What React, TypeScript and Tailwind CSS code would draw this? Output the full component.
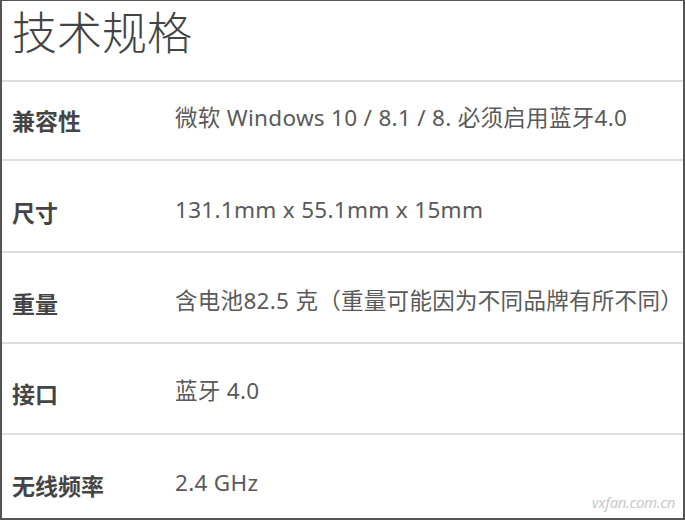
const specs = [
  { label: "兼容性", value: "微软 Windows 10 / 8.1 / 8. 必须启用蓝牙4.0", h: "h-[79px]", pt: "pt-[24px]" },
  { label: "尺寸", value: "131.1mm x 55.1mm x 15mm", h: "h-[92px]", pt: "pt-[37px]" },
  { label: "重量", value: "含电池82.5 克（重量可能因为不同品牌有所不同）", h: "h-[91px]", pt: "pt-[36px]" },
  { label: "接口", value: "蓝牙 4.0", h: "h-[91px]", pt: "pt-[35px]" },
  { label: "无线频率", value: "2.4 GHz", h: "h-[86px]", pt: "pt-[36px]" },
];

export default function App() {
  return (
    <div
      className="w-[685px] h-[520px] bg-white border-t border-l-2 border-r-2 border-b-2 border-[#555] overflow-hidden flex flex-col"
      style={{ fontFamily: '"Noto Sans", "Noto Sans CJK SC", sans-serif' }}
    >
      <div className="h-[79px] shrink-0 flex items-start pl-[10px] pt-[2px]">
        <h1 className="text-[45px] leading-[60px] font-light text-[#444]">技术规格</h1>
      </div>
      {specs.map((s, i) => (
        <div
          key={i}
          className={`relative shrink-0 flex items-start border-t-2 border-[#dedede] ${s.h} ${s.pt}`}
        >
          <div className="w-[173px] shrink-0 pl-[10px] text-[23px] leading-[30px] font-bold text-[#454545]">
            {s.label}
          </div>
          <div className="-mt-[3px] text-[22.5px] leading-[30px] tracking-[0.3px] text-[#5a5a5a] whitespace-nowrap">
            {s.value}
          </div>
          {i === specs.length - 1 && (
            <span className="absolute right-[8px] bottom-[6px] text-[15px] italic text-[#cacaca] tracking-tight">
              vxfan.com.cn
            </span>
          )}
        </div>
      ))}
    </div>
  );
}
